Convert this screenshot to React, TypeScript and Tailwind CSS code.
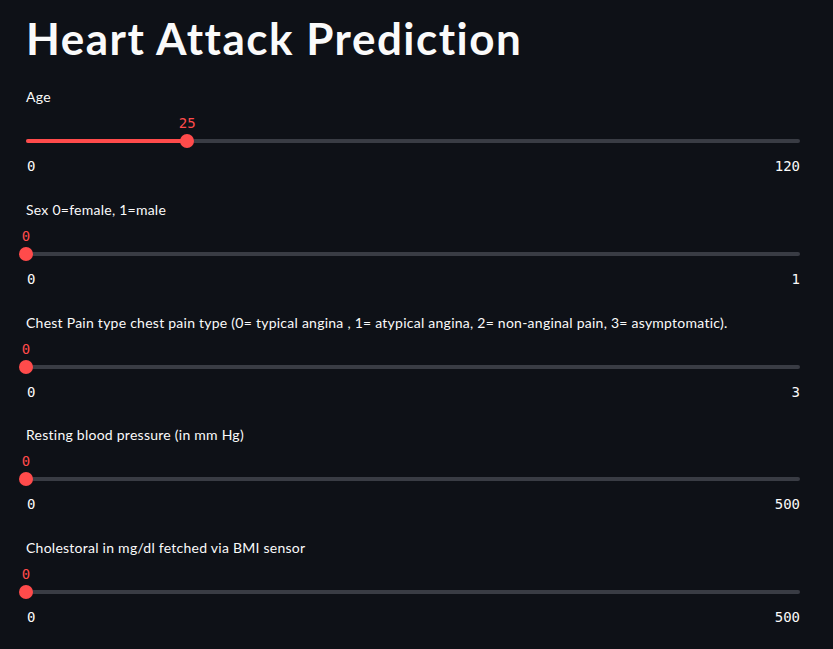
import React from 'react';

interface SliderProps {
  label: string;
  value: number;
  min: number;
  max: number;
}

const Slider = ({ label, value, min, max }: SliderProps) => {
  const pct = ((value - min) / (max - min)) * 100;

  return (
    <div className="flex flex-col">
      <div className="h-5 text-[14px] leading-5 tracking-[0.25px] text-[#fafafa] font-['Lato',sans-serif]">{label}</div>
      <div className="relative mt-[7px] h-[19px]">
        <span
          className="absolute top-0 -translate-x-1/2 text-[14px] leading-[18px] text-[#ff4b4b] font-['DejaVu_Sans_Mono',monospace]"
          style={{ left: `${pct}%` }}
        >
          {value}
        </span>
      </div>
      <div className="relative h-4 flex items-center">
        <div className="h-1 w-full rounded-full bg-[#393c44]" />
        <div className="absolute left-0 h-1 rounded-full bg-[#ff4b4b]" style={{ width: `${pct}%` }} />
        <div
          className="absolute h-[14px] w-[14px] -translate-x-1/2 rounded-full bg-[#ff4b4b]"
          style={{ left: `${pct}%` }}
        />
      </div>
      <div className="mt-[7px] flex justify-between pl-[1px] text-[14px] leading-5 text-[#fafafa] font-['DejaVu_Sans_Mono',monospace]">
        <span>{min}</span>
        <span>{max}</span>
      </div>
    </div>
  );
};

const sliders: SliderProps[] = [
  { label: 'Age', value: 25, min: 0, max: 120 },
  { label: 'Sex 0=female, 1=male', value: 0, min: 0, max: 1 },
  {
    label:
      'Chest Pain type chest pain type (0= typical angina , 1= atypical angina, 2= non-anginal pain, 3= asymptomatic).',
    value: 0,
    min: 0,
    max: 3,
  },
  { label: 'Resting blood pressure (in mm Hg)', value: 0, min: 0, max: 500 },
  { label: 'Cholestoral in mg/dl fetched via BMI sensor', value: 0, min: 0, max: 500 },
];

export default function App() {
  return (
    <div className="min-h-[649px] w-full overflow-hidden bg-[#0e1117]">
      <div className="ml-[26px] w-[774px] pt-3">
        <h1 className="h-[53px] text-[44px] leading-[53px] font-bold tracking-[1.5px] text-[#fafafa] font-['Lato',sans-serif]">
          Heart Attack Prediction
        </h1>
        <div className="mt-[22px] flex flex-col gap-[23.75px]">
          {sliders.map((s) => (
            <Slider key={s.label} {...s} />
          ))}
        </div>
      </div>
    </div>
  );
}
